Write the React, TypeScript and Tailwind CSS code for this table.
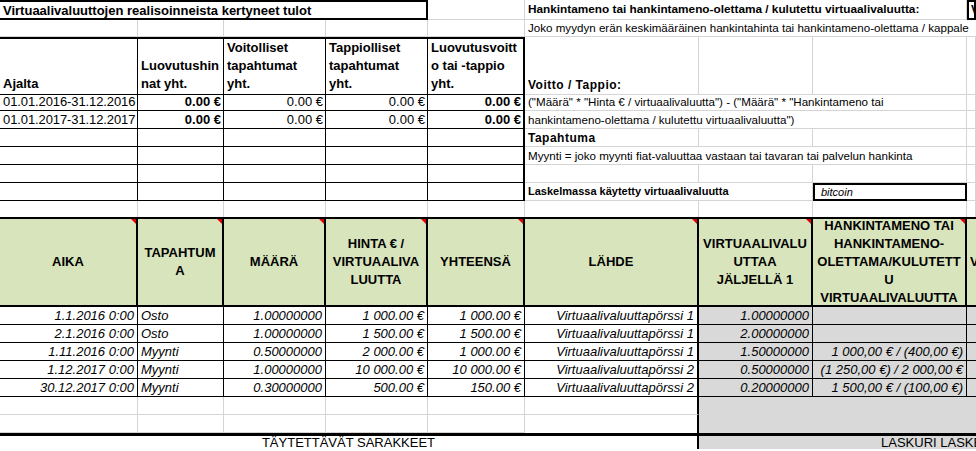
import React from 'react';

const cols = 'grid grid-cols-[138px_86px_102px_102px_97px_174px_114px_154px_1fr]';
const L = 'border-r border-b border-[#d4d4d4]';
const B = 'border-r border-b border-black';

interface Tx {
  aika: string;
  tapahtuma: string;
  maara: string;
  hinta: string;
  yhteensa: string;
  lahde: string;
  jaljella: string;
  hankinta: string;
}

const rows: Tx[] = [
  { aika: '1.1.2016 0:00', tapahtuma: 'Osto', maara: '1.00000000', hinta: '1 000.00 €', yhteensa: '1 000.00 €', lahde: 'Virtuaalivaluuttapörssi 1', jaljella: '1.00000000', hankinta: '' },
  { aika: '2.1.2016 0:00', tapahtuma: 'Osto', maara: '1.00000000', hinta: '1 500.00 €', yhteensa: '1 500.00 €', lahde: 'Virtuaalivaluuttapörssi 1', jaljella: '2.00000000', hankinta: '' },
  { aika: '1.11.2016 0:00', tapahtuma: 'Myynti', maara: '0.50000000', hinta: '2 000.00 €', yhteensa: '1 000.00 €', lahde: 'Virtuaalivaluuttapörssi 1', jaljella: '1.50000000', hankinta: '1 000,00 € / (400,00 €)' },
  { aika: '1.12.2017 0:00', tapahtuma: 'Myynti', maara: '1.00000000', hinta: '10 000.00 €', yhteensa: '10 000.00 €', lahde: 'Virtuaalivaluuttapörssi 2', jaljella: '0.50000000', hankinta: '(1 250,00 €) / 2 000,00 €' },
  { aika: '30.12.2017 0:00', tapahtuma: 'Myynti', maara: '0.30000000', hinta: '500.00 €', yhteensa: '150.00 €', lahde: 'Virtuaalivaluuttapörssi 2', jaljella: '0.20000000', hankinta: '1 500,00 € / (100,00 €)' },
];

const summary = [
  { period: '01.01.2016-31.12.2016' },
  { period: '01.01.2017-31.12.2017' },
];

// comment marker in the corner of a header cell
const Marker = () => (
  <span className="absolute right-0 top-0 w-0 h-0 border-l-[5px] border-l-transparent border-t-[5px] border-t-[#e00000]" />
);

const Head: React.FC<{ lines: string[] }> = ({ lines }) => (
  <div className="relative border-t-2 border-r-2 border-b-2 border-black bg-[#d8e4bc] flex items-center justify-center text-center font-bold text-[13px] leading-[18px] overflow-hidden">
    <div>
      {lines.map((l, i) => (
        <div key={i} className="whitespace-nowrap">{l}</div>
      ))}
    </div>
    <Marker />
  </div>
);

const TopHead: React.FC<{ lines: string[]; right?: boolean }> = ({ lines, right }) => (
  <div
    className={`border-t-2 border-b border-black flex items-end pl-[3px] pb-[1px] font-bold text-[13px] leading-[18px] ${right ? 'border-r-2' : 'border-r'}`}
  >
    <div>
      {lines.map((l, i) => (
        <div key={i} className="whitespace-nowrap">{l}</div>
      ))}
    </div>
  </div>
);

const App: React.FC = () => {
  return (
    <div className="w-[976px] h-[451px] overflow-hidden bg-white text-black font-['Liberation_Sans',Arial,sans-serif]">
      {/* row 1 */}
      <div className={`${cols} h-[20px]`}>
        <div className="col-span-4 border-t-2 border-b-2 border-r-2 border-black flex items-center pl-[3px] font-bold text-[13px] leading-none whitespace-nowrap">
          Virtuaalivaluuttojen realisoinneista kertyneet tulot
        </div>
        <div className={L} />
        <div className={`col-span-3 ${L} flex items-center pl-[3px] font-bold text-[11.8px] leading-none whitespace-nowrap`}>
          Hankintameno tai hankintameno-olettama / kulutettu virtuaalivaluutta:
        </div>
        <div className="border-2 border-black flex items-center pl-[2px] font-bold text-[12px] leading-none overflow-hidden">V</div>
      </div>

      {/* row 2 */}
      <div className={`${cols} h-[17px]`}>
        <div className={L} />
        <div className={L} />
        <div className={L} />
        <div className={L} />
        <div className={L} />
        <div className="col-span-4 border-b border-[#d4d4d4] flex items-center pl-[3px] text-[11.6px] leading-none whitespace-nowrap overflow-hidden">
          Joko myydyn erän keskimääräinen hankintahinta tai hankintameno-olettama / kappale
        </div>
      </div>

      {/* row 3: summary header */}
      <div className={`${cols} h-[56px]`}>
        <TopHead lines={['Ajalta']} />
        <TopHead lines={['Luovutushin', 'nat yht.']} />
        <TopHead lines={['Voitolliset', 'tapahtumat', 'yht.']} />
        <TopHead lines={['Tappiolliset', 'tapahtumat', 'yht.']} />
        <TopHead lines={['Luovutusvoitt', 'o tai -tappio', 'yht.']} right />
        <div className={`${L} flex items-end pl-[3px] pb-[3px] font-bold text-[12px] tracking-[0.5px] leading-none whitespace-nowrap`}>
          Voitto / Tappio:
        </div>
        <div className={L} />
        <div className={L} />
        <div className={L} />
      </div>

      {/* rows 4-5: summary data */}
      {summary.map((s, i) => (
        <div key={s.period} className={`${cols} h-[18px]`}>
          <div className={`${B} flex items-end pl-[3px] text-[13px] tracking-[-0.1px] leading-[16px] whitespace-nowrap`}>{s.period}</div>
          <div className={`${B} flex items-end justify-end pr-[2px] font-bold text-[13px] leading-[16px]`}>0.00 €</div>
          <div className={`${B} flex items-end justify-end pr-[2px] text-[13px] leading-[16px]`}>0.00 €</div>
          <div className={`${B} flex items-end justify-end pr-[2px] text-[13px] leading-[16px]`}>0.00 €</div>
          <div className="border-r-2 border-b border-black flex items-end justify-end pr-[2px] font-bold text-[13px] leading-[16px]">0.00 €</div>
          <div className={`col-span-3 ${L} flex items-center pl-[3px] text-[11.6px] leading-none whitespace-nowrap`}>
            {i === 0
              ? '("Määrä" * "Hinta € / virtuaalivaluutta") - ("Määrä" * "Hankintameno tai'
              : 'hankintameno-olettama / kulutettu virtuaalivaluutta")'}
          </div>
          <div className={L} />
        </div>
      ))}

      {/* rows 6-9: empty summary rows + notes */}
      {[0, 1, 2, 3].map((i) => (
        <div key={i} className={`${cols} h-[18px]`}>
          <div className={B} />
          <div className={B} />
          <div className={B} />
          <div className={B} />
          <div className="border-r-2 border-b border-black" />
          {i === 0 && (
            <>
              <div className={`${L} flex items-center pl-[3px] font-bold text-[12px] tracking-[0.5px] leading-none`}>Tapahtuma</div>
              <div className={L} />
              <div className={L} />
              <div className={L} />
            </>
          )}
          {i === 1 && (
            <>
              <div className={`col-span-3 ${L} flex items-center pl-[3px] text-[11.6px] leading-none whitespace-nowrap`}>
                Myynti = joko myynti fiat-valuuttaa vastaan tai tavaran tai palvelun hankinta
              </div>
              <div className={L} />
            </>
          )}
          {i === 2 && (
            <>
              <div className={L} />
              <div className={L} />
              <div className={L} />
              <div className={L} />
            </>
          )}
          {i === 3 && (
            <>
              <div className={`col-span-2 ${L} flex items-center pl-[3px] font-bold text-[11px] leading-none whitespace-nowrap`}>
                Laskelmassa käytetty virtuaalivaluutta
              </div>
              <div className="border-2 border-black flex items-center pl-[6px] italic text-[11px] leading-none">bitcoin</div>
              <div className={L} />
            </>
          )}
        </div>
      ))}

      {/* row 10 */}
      <div className={`${cols} h-[16px]`}>
        {[...Array(9)].map((_, i) => (
          <div key={i} className="border-r border-[#d4d4d4]" />
        ))}
      </div>

      {/* transactions header */}
      <div className={`${cols} h-[90px]`}>
        <Head lines={['AIKA']} />
        <Head lines={['TAPAHTUM', 'A']} />
        <Head lines={['MÄÄRÄ']} />
        <Head lines={['HINTA € /', 'VIRTUAALIVA', 'LUUTTA']} />
        <Head lines={['YHTEENSÄ']} />
        <Head lines={['LÄHDE']} />
        <Head lines={['VIRTUAALIVALU', 'UTTAA', 'JÄLJELLÄ 1']} />
        <Head lines={['HANKINTAMENO TAI', 'HANKINTAMENO-', 'OLETTAMA/KULUTETT', 'U', 'VIRTUAALIVALUUTTA']} />
        <div className="border-t-2 border-b-2 border-black bg-[#d8e4bc] flex items-center pl-[3px] font-bold text-[13px] leading-[18px] whitespace-nowrap overflow-hidden">
          VOITTO / TAPPIO
        </div>
      </div>

      {/* transactions */}
      {rows.map((r) => (
        <div key={r.aika} className={`${cols} h-[18px] italic text-[13px] leading-[16px]`}>
          <div className={`${B} flex items-end justify-end pr-[3px] whitespace-nowrap`}>{r.aika}</div>
          <div className={`${B} flex items-end pl-[3px]`}>{r.tapahtuma}</div>
          <div className={`${B} flex items-end justify-end pr-[3px]`}>{r.maara}</div>
          <div className={`${B} flex items-end justify-end pr-[3px] whitespace-nowrap`}>{r.hinta}</div>
          <div className={`${B} flex items-end justify-end pr-[3px] whitespace-nowrap`}>{r.yhteensa}</div>
          <div className="border-r-2 border-b border-black flex items-end justify-end pr-[3px] whitespace-nowrap">{r.lahde}</div>
          <div className={`${B} bg-[#d9d9d9] flex items-end justify-end pr-[3px]`}>{r.jaljella}</div>
          <div className={`${B} bg-[#d9d9d9] flex items-end justify-end pr-[3px] whitespace-nowrap`}>{r.hankinta}</div>
          <div className="border-b border-black bg-[#d9d9d9]" />
        </div>
      ))}

      {/* empty rows */}
      {[0, 1].map((i) => (
        <div key={i} className={`${cols} h-[18px]`}>
          <div className={L} />
          <div className={L} />
          <div className={L} />
          <div className={L} />
          <div className={L} />
          <div className={`border-r-2 border-r-black ${i === 0 ? 'border-b border-b-[#d4d4d4]' : ''}`} />
          <div className="col-span-3 bg-[#d9d9d9]" />
        </div>
      ))}

      {/* footer labels */}
      <div className={`${cols} h-[16px] border-t-[3px] border-black`}>
        <div className="col-span-6 border-r-2 border-black flex items-center justify-center text-[13px] leading-none whitespace-nowrap">
          TÄYTETTÄVÄT SARAKKEET
        </div>
        <div className="col-span-3 bg-[#d9d9d9] flex items-center pl-[182px] text-[13px] leading-none whitespace-nowrap overflow-hidden">
          LASKURI LASKEE
        </div>
      </div>
    </div>
  );
};

export default App;
